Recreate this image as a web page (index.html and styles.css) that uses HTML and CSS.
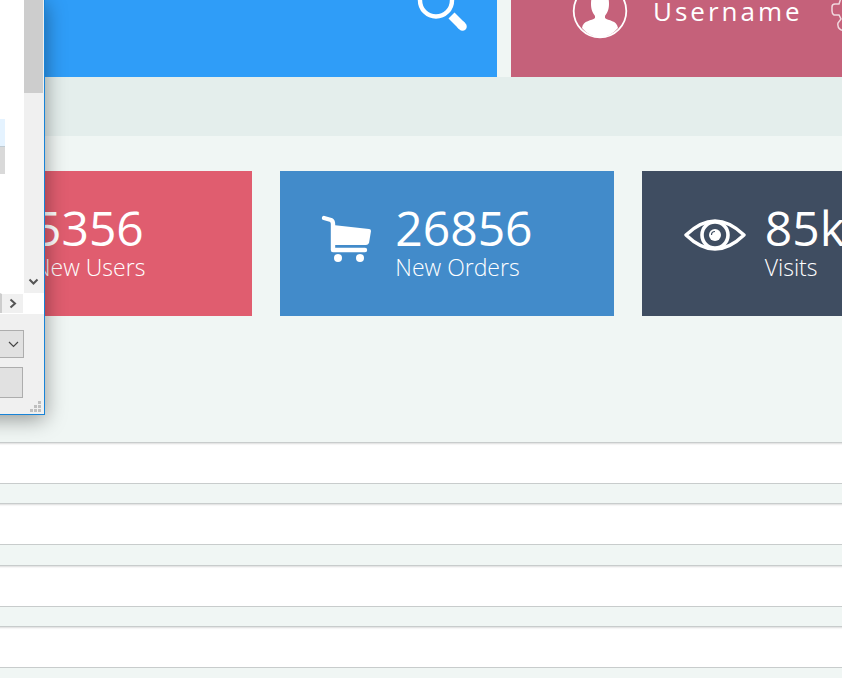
FILE: index.html
```
<!DOCTYPE html>
<html lang="en">
<head>
<meta charset="utf-8">
<meta name="viewport" content="width=device-width, initial-scale=1">
<title>Dashboard</title>
<link rel="stylesheet" href="styles.css">
</head>
<body>
<header class="topbar">
  <div class="search">
    <button class="icon-button" type="button" aria-label="Search">
      <svg width="52" height="60" viewBox="0 0 52 60" fill="none" stroke="#fff"><circle cx="19" cy="28.500" r="16" stroke-width="4.400"/><path d="M34.500 43.500L45 54" stroke-width="8.500"/><path d="M44 53L45.500 54.500" stroke-width="8.500" stroke-linecap="round"/></svg>
    </button>
  </div>
  <div class="user">
    <svg class="avatar" width="56" height="56" viewBox="0 0 56 56"><circle cx="28" cy="28" r="26.300" fill="none" stroke="#fff" stroke-width="1.800"/><path fill="#fff" d="M19 21C19 12 22 8 28 8s9 4 9 13c0 6-2 9-4 12v2c3 3 12 2 13 10A26 26 0 0 1 28 54.500A26 26 0 0 1 10 45c1-8 10-7 13-10v-2c-2-3-4-6-4-12z"/></svg>
    <span class="username">Username</span>
    <button class="icon-button settings" type="button" aria-label="Settings">
      <svg width="52" height="52" viewBox="0 0 52 52" fill="none" stroke="#fff" stroke-opacity=".75" stroke-width="1.500"><path d="M21 1h10v6l6 3 5-5 7 7-5 5 2 5h5v10h-5l-2 5 5 5-7 7-5-5-6 3v5H21v-5l-5-2c-6 2-10-2-9-7l3-4-2-4H3q-2-1-2-4v-4q0-3 3-3h4l2-6-4-4 6-7 5 4 4-2z"/><circle cx="26" cy="27" r="9"/></svg>
    </button>
  </div>
</header>
<div class="band"></div>
<main>
  <section class="stats" aria-label="Statistics">
    <article class="stat users">
      <div><p class="value">5356</p><p class="label">New Users</p></div>
    </article>
    <article class="stat orders">
      <svg class="stat-icon" width="64" height="52" viewBox="0 0 64 52" fill="#fff"><path d="M12 5L19 7Q21 8 21 11L21 37H53" fill="none" stroke="#fff" stroke-width="4.400" stroke-linecap="round" stroke-linejoin="round"/><path d="M21 12L57 16Q59 16 59 18L57 30Q56 32 54 32H22z"/><circle cx="26" cy="45" r="4"/><circle cx="48" cy="45" r="4"/></svg>
      <div><p class="value">26856</p><p class="label">New Orders</p></div>
    </article>
    <article class="stat visits">
      <svg class="stat-icon" width="64" height="52" viewBox="0 0 64 52" fill="none" stroke="#fff"><path d="M4 22Q33-6 62 22Q33 50 4 22z" stroke-width="3.400" stroke-linejoin="round"/><circle cx="33" cy="22" r="13" stroke-width="3.600"/><circle cx="33" cy="22" r="6" fill="#fff" stroke="none"/><path d="M29.500 22Q29.500 18.500 33 18.500" stroke="#3f4d61" stroke-width="1.200"/></svg>
      <div><p class="value">85k</p><p class="label">Visits</p></div>
    </article>
  </section>
  <form class="fields">
    <input type="text" aria-label="Field 1">
    <input type="text" aria-label="Field 2">
    <input type="text" aria-label="Field 3">
    <input type="text" aria-label="Field 4">
  </form>
</main>
<aside class="dialog" aria-label="File dialog">
  <div class="file-area">
    <div class="files"><div class="file hovered"></div><div class="file selected"></div></div>
    <div class="scroll-y">
      <div class="thumb-y"></div>
      <button type="button" aria-label="Scroll down"><svg width="11" height="8" viewBox="0 0 11 8"><path d="M1.500 1.500L5.500 5.500L9.500 1.500" fill="none" stroke="#555" stroke-width="2"/></svg></button>
    </div>
  </div>
  <div class="scroll-x">
    <button type="button" aria-label="Scroll right"><svg width="8" height="11" viewBox="0 0 8 11"><path d="M1.500 1.500L6 5.500L1.500 9.500" fill="none" stroke="#555" stroke-width="2"/></svg></button>
  </div>
  <div class="type-box">
    <select class="type" aria-label="File type"><option></option></select>
    <svg class="chevron" width="11" height="7" viewBox="0 0 11 7"><path d="M1 1L5.500 5.500L10 1" fill="none" stroke="#444" stroke-width="1.200"/></svg>
  </div>
  <button class="cancel" type="button" aria-label="Cancel"></button>
  <svg class="grip" width="11" height="11" viewBox="0 0 11 11" fill="#bfbfbf"><path d="M8 0h3v3H8zM4 4h3v3H4zM8 4h3v3H8zM0 8h3v3H0zM4 8h3v3H4zM8 8h3v3H8z"/></svg>
</aside>
</body>
</html>
```
FILE: styles.css
```
* {
  box-sizing: border-box;
}

body {
  margin: 0;
  min-height: 100vh;
  overflow: hidden;
  background: #f0f6f4;
  color: #fff;
  font-family: "Open Sans", sans-serif;
}

p {
  margin: 0;
}

svg {
  display: block;
  flex: none;
}

button {
  padding: 0;
  border: 0;
  background: none;
}

.topbar {
  display: grid;
  grid-template-columns: 497fr 331fr;
  gap: 14px;
  height: 77px;
}

.search,
.user {
  display: flex;
  min-width: 0;
  overflow: hidden;
}

.search {
  justify-content: flex-end;
  padding-right: 28px;
  background: #2f9df8;
}

.search .icon-button {
  margin-top: -28px;
  height: 60px;
}

.user {
  padding-left: 61px;
  background: #c5617a;
}

.avatar {
  margin-top: -17px;
}

.username {
  margin-top: -7px;
  padding-left: 25px;
  font-size: 26px;
  line-height: 36px;
  letter-spacing: 3px;
}

.settings {
  height: 52px;
  margin: -15px 0 0 28px;
}

.band {
  height: 59px;
  background: #e4eeec;
}

.stats {
  display: grid;
  grid-template-columns: 252fr 333fr 200fr;
  gap: 28px;
  padding-top: 35px;
}

.stat {
  display: flex;
  min-width: 0;
  height: 145px;
  overflow: hidden;
  padding: 32px 0 0 40px;
}

.users {
  padding-left: 34px;
  background: #e05d6f;
}

.orders {
  padding-left: 32px;
  background: #428bca;
}

.visits {
  background: #3f4d61;
}

.stat-icon {
  margin: 10px 19px 0 0;
}

.value {
  font-size: 48px;
  line-height: 50px;
}

.label {
  font-size: 23px;
  font-weight: 300;
  line-height: 28px;
  white-space: nowrap;
}

.fields {
  display: flex;
  flex-direction: column;
  justify-content: space-between;
  height: 226px;
  margin-top: 126px;
}

.fields input {
  width: 100%;
  height: 42px;
  padding: 6px 12px;
  border: solid #c8cccc;
  border-width: 1px 0;
  border-radius: 0;
  background: #fff;
  box-shadow: inset 0 3px 2px -2px #00000024;
}

.dialog {
  position: absolute;
  top: 0;
  left: -40px;
  width: 85px;
  padding-left: 40px;
  border: solid #1883d7;
  border-width: 0 1px 1px 0;
  background: #f0f0f0;
  box-shadow: 0 4px 20px #00000066;
}

.file-area {
  display: flex;
  height: 293px;
}

.files {
  width: 24px;
  padding-top: 119px;
  background: #fff;
}

.file {
  width: 5px;
  height: 27px;
}

.hovered {
  background: #e5f3ff;
}

.selected {
  height: 28px;
  border-top: 1px solid #c0ccd4;
  background: #d9d9d9;
}

.scroll-y {
  display: flex;
  flex: 1;
  flex-direction: column;
  justify-content: space-between;
}

.thumb-y {
  width: 19px;
  height: 93px;
  background: #cdcdcd;
}

.scroll-y button {
  display: flex;
  justify-content: center;
  width: 19px;
  height: 15px;
}

.scroll-x {
  height: 21px;
  background: #fff;
}

.scroll-x button {
  display: flex;
  align-items: center;
  justify-content: center;
  width: 23px;
  height: 20px;
  border-left: 2px solid #cdcdcd;
  border-top: 1px solid #fff;
  background: #f0f0f0;
}

.type-box {
  display: grid;
  align-items: center;
  width: 24px;
  margin-top: 16px;
}

.type,
.cancel {
  display: block;
  border: solid #adadad;
  border-width: 1px 1px 1px 0;
  border-radius: 0;
  background: #e1e1e1;
}

.type {
  grid-area: 1 / 1;
  width: 24px;
  height: 28px;
  padding: 0;
  appearance: none;
}

.chevron {
  grid-area: 1 / 1;
  justify-self: end;
  margin-right: 5px;
  pointer-events: none;
  z-index: 1;
}

.cancel {
  width: 23px;
  height: 31px;
  margin-top: 9px;
}

.grip {
  margin: 3px 3px 2px auto;
}
```
